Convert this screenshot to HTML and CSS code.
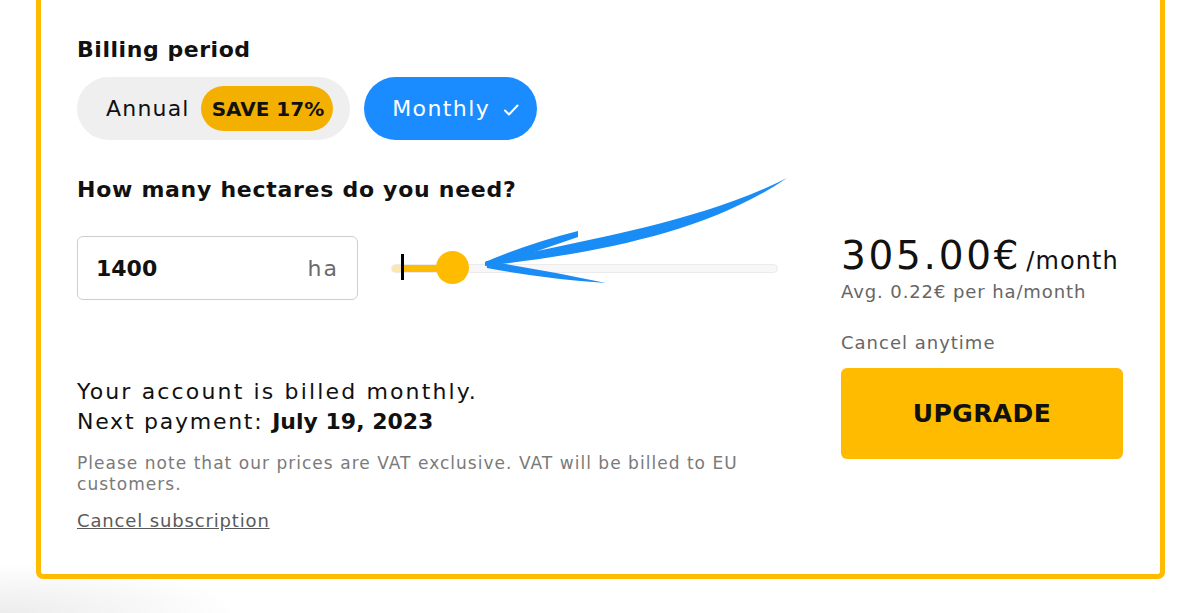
FILE: index.html
```html
<!DOCTYPE html>
<html lang="en">
<head>
<meta charset="utf-8">
<title>Billing</title>
<link rel="stylesheet" href="styles.css">
</head>
<body>
<div class="page">
  <div class="card">
    <h2 class="title">Billing period</h2>
    <div class="toggles">
      <div class="annual"><span class="label">Annual</span><span class="save">SAVE 17%</span></div>
      <div class="monthly"><span class="label">Monthly</span>
        <svg class="check" width="16" height="16" viewBox="0 0 16 16"><path d="M2 8.5 L6 12.5 L14.5 3.5" fill="none" stroke="#fff" stroke-width="2" stroke-linecap="round" stroke-linejoin="round"/></svg>
      </div>
    </div>
    <h2 class="title q">How many hectares do you need?</h2>
    <div class="main">
      <div class="left">
        <div class="inputrow">
          <div class="field"><span class="val">1400</span><span class="unit">ha</span></div>
          <div class="slider">
            <div class="track"><div class="fill" style="width:62px"></div></div>
            <div class="thumb"></div>
            <div class="cursor"></div>
          </div>
        </div>
        <div class="account">
          <div class="billed">Your account is billed monthly.</div>
          <div>Next payment: <b>July 19, 2023</b></div>
        </div>
        <p class="note">Please note that our prices are VAT exclusive. VAT will be billed to EU customers.</p>
        <a class="cancel" href="#">Cancel subscription</a>
      </div>
      <div class="right">
        <div class="price"><span class="amount">305.00€</span> <span class="per">/month</span></div>
        <div class="avg">Avg. 0.22€ per ha/month</div>
        <div class="anytime">Cancel anytime</div>
        <button class="upgrade">UPGRADE</button>
      </div>
    </div>
  </div>
  <svg class="arrow" viewBox="0 0 1200 613" width="1200" height="613">
    <path d="M485 262 C590 239 700 222 787 178 C706 233 596 253 485 266 Z" fill="#1a8cf5"/>
    <path d="M485 262 Q530 243 578 231 L578 237 Q534 252 489 268 Z" fill="#1a8cf5"/>
    <path d="M486 261 Q545 270 606 283 Q545 279 487 268 Z" fill="#1a8cf5"/>
  </svg>
</div>
</body>
</html>
```
FILE: styles.css
```css
html, body {
  margin: 0;
  padding: 0;
}
body {
  font-family: "DejaVu Sans", "Liberation Sans", sans-serif;
  color: #111;
  background: #fff;
}
.page {
  position: relative;
  width: 1200px;
  height: 613px;
  overflow: hidden;
  background: radial-gradient(ellipse 240px 50px at 0 100%, #ececec 0%, rgba(255,255,255,0) 100%);
}
.card {
  margin-left: 36px;
  width: 1129px;
  height: 579px;
  box-sizing: border-box;
  border: 5px solid #ffbb00;
  border-top: 0;
  border-radius: 0 0 7px 7px;
  padding: 36px 37px 0 36px;
  background: #fff;
}
.title {
  margin: 0;
  font-size: 22px;
  line-height: 28px;
  font-weight: 700;
  letter-spacing: 0.55px;
}
.q {
  margin-top: 36px;
  letter-spacing: 0.72px;
}
.toggles {
  display: flex;
  gap: 14px;
  margin-top: 13px;
}
.annual, .monthly {
  height: 63px;
  border-radius: 32px;
  display: flex;
  align-items: center;
  font-size: 22px;
  box-sizing: border-box;
}
.annual {
  background: #efefef;
  padding: 0 17px 0 29px;
  gap: 11px;
}
.annual .label {
  letter-spacing: 1.2px;
}
.save {
  background: #f4b000;
  height: 45px;
  border-radius: 23px;
  padding: 0 9px 0 11px;
  display: flex;
  align-items: center;
  font-weight: 700;
  font-size: 20px;
}
.monthly {
  background: #1a8cff;
  color: #fff;
  padding: 0 18px 0 28px;
  gap: 13px;
}
.monthly .label {
  letter-spacing: 1.4px;
}
.check {
  margin-top: 2px;
}
.main {
  display: flex;
  margin-top: 32px;
}
.left {
  width: 765px;
}
.right {
  width: 282px;
}
.inputrow {
  display: flex;
  align-items: center;
  gap: 33px;
}
.field {
  width: 281px;
  height: 64px;
  box-sizing: border-box;
  border: 1.5px solid #cfcfcf;
  border-radius: 6px;
  padding: 0 18px 0 18px;
  display: flex;
  justify-content: space-between;
  align-items: center;
  font-size: 22px;
}
.val {
  font-weight: 700;
}
.unit {
  color: #6b6b6b;
  letter-spacing: 2px;
}
.slider {
  position: relative;
  width: 387px;
  height: 32px;
  display: flex;
  align-items: center;
}
.track {
  width: 100%;
  height: 9px;
  box-sizing: border-box;
  border: 1px solid #ebebeb;
  border-radius: 5px;
  background: #f7f7f7;
  overflow: hidden;
}
.fill {
  height: 100%;
  background: linear-gradient(to right, #fde6ad 0 11px, #ffbb00 11px);
}
.thumb {
  position: absolute;
  left: 45px;
  top: -1px;
  width: 33px;
  height: 33px;
  border-radius: 50%;
  background: #ffbb00;
}
.cursor {
  position: absolute;
  left: 10px;
  top: 2px;
  width: 3px;
  height: 26px;
  background: #000;
}
.account {
  margin-top: 77px;
  font-size: 22px;
  line-height: 30px;
  letter-spacing: 1.75px;
}
.account .billed {
  letter-spacing: 2.15px;
}
.account b {
  letter-spacing: 0;
}
.note {
  margin: 16px 0 0;
  width: 700px;
  font-size: 17px;
  line-height: 21px;
  color: #7a7a7a;
  letter-spacing: 1.03px;
}
.cancel {
  display: inline-block;
  margin-top: 15px;
  font-size: 18px;
  line-height: 22px;
  color: #5a5a5a;
  letter-spacing: 0.85px;
}
.price {
  line-height: 40px;
  white-space: nowrap;
}
.amount {
  font-size: 39px;
  letter-spacing: 2.7px;
}
.per {
  font-size: 24px;
  letter-spacing: 1.1px;
}
.avg {
  margin-top: -3px;
  font-size: 18px;
  line-height: 22px;
  color: #666;
  letter-spacing: 0.9px;
}
.anytime {
  margin-top: 29px;
  font-size: 18px;
  line-height: 22px;
  color: #666;
  letter-spacing: 1px;
}
.upgrade {
  margin-top: 14px;
  display: block;
  width: 282px;
  height: 91px;
  border: 0;
  border-radius: 6px;
  background: #ffbb00;
  font-family: inherit;
  font-size: 25px;
  font-weight: 700;
  color: #111;
  letter-spacing: 0.4px;
}
.arrow {
  position: absolute;
  left: 0;
  top: 0;
  pointer-events: none;
}
```
